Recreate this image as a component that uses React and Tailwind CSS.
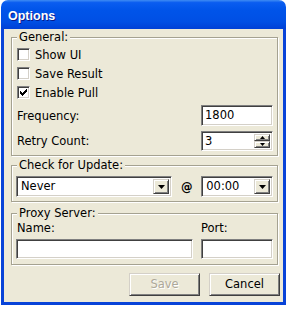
import React from "react";

const font = "font-['DejaVu_Sans',sans-serif] text-[11.5px] text-black";
const sunken =
  "bg-white border border-t-[#7f7f7f] border-l-[#7f7f7f] border-b-white border-r-white shadow-[inset_1px_1px_0_#404040,inset_-1px_-1px_0_#d4d0c8]";
const raised =
  "bg-[#ECE9D8] border border-t-[#d4d0c8] border-l-[#d4d0c8] border-b-[#404040] border-r-[#404040] shadow-[inset_1px_1px_0_white,inset_-1px_-1px_0_#808080]";

function Group({ label, className = "", children }) {
  return (
    <div
      className={
        "relative border border-[#a5a291] shadow-[inset_1px_1px_0_white,1px_1px_0_white] " +
        className
      }
    >
      <span className="absolute left-[5px] -top-[8px] px-[2px] bg-[#ECE9D8] leading-[14px] whitespace-nowrap">
        {label}
      </span>
      {children}
    </div>
  );
}

function Checkbox({ label, checked }) {
  return (
    <div className="h-[19px] flex items-center">
      <div className={"w-[13px] h-[13px] ml-[1px] flex items-center justify-center " + sunken}>
        {checked && (
          <svg width="7" height="7" viewBox="0 0 7 7">
            <path d="M0 2h1v1h1v1h1V3h1V2h1V1h1V0h1v3H6v1H5v1H4v1H3v1H2V6H1V5H0z" fill="black" />
          </svg>
        )}
      </div>
      <span className="ml-[5px] leading-[14px]">{label}</span>
    </div>
  );
}

function ArrowDown({ w = 7, h = 4 }) {
  return (
    <svg width={w} height={h} viewBox={`0 0 ${w} ${h}`}>
      <polygon points={`0,0 ${w},0 ${w / 2},${h}`} fill="black" />
    </svg>
  );
}
function ArrowUp({ w = 5, h = 3 }) {
  return (
    <svg width={w} height={h} viewBox={`0 0 ${w} ${h}`}>
      <polygon points={`0,${h} ${w},${h} ${w / 2},0`} fill="black" />
    </svg>
  );
}

function Combo({ value, className }) {
  return (
    <div className={"h-[21px] flex items-stretch p-[2px] " + sunken + " " + className}>
      <span className="flex-1 pl-[2px] leading-[15px] self-center">{value}</span>
      <div className={"w-[16px] flex items-center justify-center " + raised}>
        <ArrowDown />
      </div>
    </div>
  );
}

export default function App() {
  return (
    <div className={"w-[288px] h-[309px] bg-white " + font}>
      <div className="w-[285px] ml-[1px]">
        <div className="h-[29px] rounded-t-[7px] bg-[linear-gradient(180deg,#3f8cf3_0%,#0a5df0_9%,#0054e9_35%,#004fe4_75%,#0040d6_100%)] flex items-center pl-[7px]">
          <span className="font-['Liberation_Sans',sans-serif] font-bold text-[12.5px] text-white [text-shadow:1px_1px_0_#0a1a8a] mt-[3px]">
            Options
          </span>
        </div>
        <div className="h-[276px] border-x-[3px] border-b-[3px] border-[#0843d8] bg-[#ECE9D8] pl-[7px] pr-[5px] pt-[8px]">
          <Group label="General:" className="pt-[7px] pl-[4px] pr-[4px] pb-[4px]">
            <Checkbox label="Show UI" />
            <Checkbox label="Save Result" />
            <Checkbox label="Enable Pull" checked />
            <div className="flex items-center justify-between mt-[3px]">
              <span className="leading-[14px] pl-[1px]">Frequency:</span>
              <div className={"w-[72px] h-[21px] pl-[3px] flex items-center " + sunken}>1800</div>
            </div>
            <div className="flex items-center justify-between mt-[5px]">
              <span className="leading-[14px] pl-[1px]">Retry Count:</span>
              <div className={"w-[72px] h-[20px] flex items-stretch p-[2px] " + sunken}>
                <span className="flex-1 pl-[1px] self-center leading-[14px]">3</span>
                <div className="w-[16px] flex flex-col">
                  <div className={"flex-1 flex items-center justify-center " + raised}>
                    <ArrowUp />
                  </div>
                  <div className={"flex-1 flex items-center justify-center " + raised}>
                    <ArrowDown w={5} h={3} />
                  </div>
                </div>
              </div>
            </div>
          </Group>

          <Group label="Check for Update:" className="mt-[9px] pt-[10px] pl-[4px] pr-[4px] pb-[4px]">
            <div className="flex items-center">
              <Combo value="Never" className="w-[157px]" />
              <span className="w-[29px] text-center font-bold leading-[14px]">@</span>
              <Combo value="00:00" className="w-[72px]" />
            </div>
          </Group>

          <Group label="Proxy Server:" className="mt-[11px] pt-[7px] pl-[4px] pr-[4px] pb-[5px]">
            <div className="flex">
              <div className="flex flex-col w-[177px]">
                <span className="leading-[14px] pl-[1px]">Name:</span>
                <div className={"h-[20px] mt-[4px] " + sunken}></div>
              </div>
              <div className="flex flex-col w-[72px] ml-[8px]">
                <span className="leading-[14px]">Port:</span>
                <div className={"h-[20px] mt-[4px] " + sunken}></div>
              </div>
            </div>
          </Group>

          <div className="flex justify-end gap-[9px] mt-[8px] pr-[0px] -mr-[2px]">
            <button className={"w-[71px] h-[23px] text-[#aca899] [text-shadow:1px_1px_0_white] " + raised}>
              Save
            </button>
            <button className={"w-[71px] h-[23px] " + raised}>Cancel</button>
          </div>
        </div>
      </div>
    </div>
  );
}
